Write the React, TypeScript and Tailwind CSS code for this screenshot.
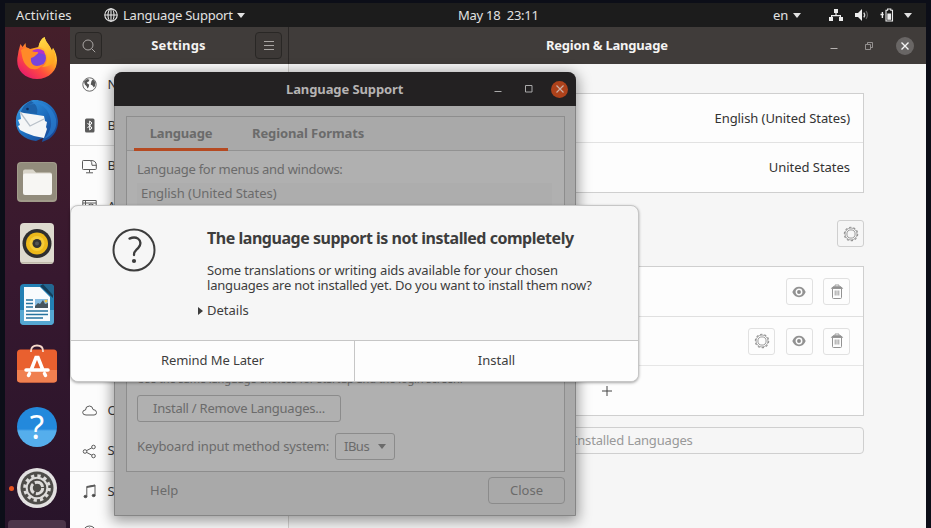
import React from "react";

const FONT = "font-['Noto_Sans','Open_Sans',sans-serif]";

function Caret({ className = "" }: { className?: string }) {
  return (
    <svg viewBox="0 0 8 5" className={`h-[5px] w-2 ${className}`}>
      <path d="M0 0h8L4 5z" fill="currentColor" />
    </svg>
  );
}

function TopBar() {
  return (
    <header className="flex h-6 shrink-0 items-center bg-[#1c1c1c] text-[13px] leading-6 text-[#e2e2e2]">
      <span className="ml-[11px] w-[57px] whitespace-nowrap tracking-[0.16px]">Activities</span>
      <svg viewBox="0 0 14 14" className="ml-[31px] size-[14px]" fill="none" stroke="#e6e6e6" strokeWidth="1.1">
        <circle cx="7" cy="7" r="6.2" />
        <ellipse cx="7" cy="7" rx="3" ry="6.2" />
        <path d="M.8 7h12.4M7 .8v12.4" />
      </svg>
      <span className="ml-[5px] w-[110px] whitespace-nowrap tracking-[-0.22px]">Language Support</span>
      <Caret className="ml-1" />
      <span className="ml-[213px] w-[82px] whitespace-pre tracking-[-0.25px]">May 18  23:11</span>
      <span className="ml-[233px] w-[16px]">en</span>
      <Caret className="ml-1" />
      <svg viewBox="0 0 14 12" className="ml-[28px] h-3 w-[14px]" fill="#ededed">
        <path d="M5 0h4v4H7.6v2H12v2h2v4h-4V8h.8V7.2H3.2V8H4v4H0V8h2V6h4.400V4H5z" />
      </svg>
      <svg viewBox="0 0 14 12" className="ml-3 h-3 w-[14px]" fill="none">
        <path d="M0 4h3l4-4v12L3 8H0z" fill="#ededed" />
        <path d="M8.8 3.6q1.8 2.4 0 4.8" stroke="#d5d5d5" strokeWidth="1.3" />
        <path d="M11 2q2.8 4 0 8" stroke="#666" strokeWidth="1.2" />
      </svg>
      <svg viewBox="0 0 14 14" className="ml-[11px] size-[14px]" fill="none">
        <path d="M2.4 4v6M.5 6.5h3.2" stroke="#ededed" strokeWidth="1.4" />
        <path d="M6 2.2h1.6V1h3.2v1.200h1.700v10.800H6z" stroke="#ededed" strokeWidth="1.1" />
        <path d="M7.300 5.500h3.800v6.300H7.300z" fill="#ededed" />
      </svg>
      <Caret className="ml-[10px]" />
    </header>
  );
}

function Firefox() {
  return (
    <svg viewBox="0 0 42 44" className="h-[44px] w-[42px]">
      <defs>
        <linearGradient id="fx" x1=".85" y1=".1" x2=".2" y2=".9">
          <stop offset="0" stopColor="#ffee45" />
          <stop offset=".4" stopColor="#ff9a24" />
          <stop offset=".7" stopColor="#ff4a40" />
          <stop offset="1" stopColor="#ea2167" />
        </linearGradient>
        <linearGradient id="fy" x1="0" y1="0" x2=".3" y2="1">
          <stop offset="0" stopColor="#ffe04a" />
          <stop offset="1" stopColor="#ffa51f" />
        </linearGradient>
      </defs>
      <path d="M3.500 11.500q-1.300 4-1.500 7C0 27 2 33 6 37c8 8 22 8 30 0 7-7 6-18 1-25l-1 3C34 9 30 7 28.500 1 25 3 23 7 22.500 11L14 13l-4-2-.5-4-3 4-2-3z" fill="url(#fx)" />
      <path d="M28.500 1C25 3 23 7 22.500 11c5 0 9 4 9 9 0 6-2 9-6 11 12 0 17-8 11.500-19l-1 3C34 9 30 7 28.500 1z" fill="url(#fy)" />
      <circle cx="21.500" cy="22" r="8.500" fill="#7745dd" />
      <path d="M16 15q6-4 12 0l1 4q-5-3-9-1z" fill="#b233c9" />
      <path d="M5 14q6-4 10 0 1 2 6 2c2 0 1 2-1 3-2 2-3 2-5 3-1 8 6 10 12 6-4 7-12 6-15 3-6-5-6-12-7-17z" fill="#ff8a28" />
    </svg>
  );
}

function Thunderbird() {
  return (
    <svg viewBox="0 0 44 44" className="size-[44px]">
      <defs>
        <linearGradient id="tb" x1="0" y1="0" x2="1" y2="1">
          <stop offset="0" stopColor="#39a0e6" />
          <stop offset=".5" stopColor="#1f6fc0" />
          <stop offset="1" stopColor="#173a86" />
        </linearGradient>
      </defs>
      <path d="M16 1.500C29-1 42 8 43 22c0 9-4 14-9 18l-7 3 1-4-7 3C9 41 0 33 1 21 1 12 8 5 16 1.500z" fill="url(#tb)" />
      <path d="M16 2q8 4 6 13-8-1-17 0Q8 5 16 2z" fill="#1d62aa" />
      <path d="m5 13 4 1 20 3 1 5 2 1-1 5 1 2-3 9-10-2-8-3-6-3-2-4 2-1-2-5 3-1z" fill="#f5f6f7" />
      <path d="m5 13 10 14 14-7" fill="none" stroke="#b8c0c9" strokeWidth="1.300" />
      <path d="M14 6q14-4 20 9t-5 25q14-6 12-20Q36 4 20 3z" fill="#2b83d6" opacity=".65" />
      <circle cx="12.500" cy="10" r="1.300" fill="#102f60" />
    </svg>
  );
}

function Files() {
  return (
    <svg viewBox="0 0 40 40" className="size-10">
      <rect width="40" height="40" rx="4" fill="#a19b8a" />
      <rect x="1" y="1" width="38" height="37" rx="3.500" fill="#928c7c" />
      <path d="M6 9.500Q6 7.500 8 7.500h8l3 3h14q2 0 2 2V24H6z" fill="#d9d5ca" />
      <rect x="6" y="11.500" width="29" height="21.500" rx="2" fill="#f7f6f3" />
    </svg>
  );
}

function Rhythmbox() {
  return (
    <svg viewBox="0 0 34 41" className="h-[41px] w-[34px]">
      <rect width="34" height="41" rx="4" fill="#dedacf" />
      <rect x="1" y="39" width="32" height="1.500" rx="1" fill="#c0baab" />
      <circle cx="17" cy="20.500" r="14.500" fill="#2f2f2f" />
      <circle cx="17" cy="20.500" r="11" fill="#edb91a" />
      <circle cx="17" cy="20.500" r="7.500" fill="#f6cc38" />
      <circle cx="17" cy="20.500" r="4.500" fill="#333" />
      <circle cx="17" cy="20.500" r="2" fill="#555" />
    </svg>
  );
}

function Writer() {
  return (
    <svg viewBox="0 0 34 41" className="h-[41px] w-[34px]">
      <path d="M4 0h26q4 0 4 4v33q0 4-4 4H4q-4 0-4-4V4q0-4 4-4z" fill="#2380b4" />
      <path d="M0 26h34v11q0 4-4 4H4q-4 0-4-4z" fill="#55a7d2" />
      <path d="M23 0h7q4 0 4 4v8z" fill="#236792" />
      <path d="M4 3h16l10 10v24H4z" fill="#f8fbfd" />
      <path d="m20 2 13 12v-3L23 0z" fill="#163e5a" />
      <path d="M6 16h7M6 19.500h7M6 23h7M6 27h22M6 30.500h22M6 34h17" stroke="#26739f" strokeWidth="1.700" />
      <path d="M15 15h13v9H15z" fill="#86bde2" />
      <path d="m15 22 3-3 2 1 3-4 2 4 3-1v5H15z" fill="#46555d" />
      <circle cx="26" cy="17" r="1.500" fill="#f2c344" />
    </svg>
  );
}

function Software() {
  return (
    <svg viewBox="0 0 40 39" className="h-[39px] w-10">
      <rect y="5.500" width="40" height="33" rx="3.500" fill="#e9602f" />
      <path d="M0 26h40v9q0 3.500-3.500 3.500h-33Q0 38.500 0 35z" fill="#f08050" />
      <path d="M14 8V7q0-5.500 6-5.500T26 7v1" fill="none" stroke="#f6d8ca" strokeWidth="1.800" />
      <path d="m11.500 31.500 1-2M28.500 31.500l-1-2M14.500 25 19 13.500h2L25.500 25M9 26h22" fill="none" stroke="#fff" strokeWidth="3.500" strokeLinecap="round" />
    </svg>
  );
}

function HelpIcon() {
  return (
    <div className="flex size-10 items-center justify-center rounded-full bg-gradient-to-b from-[#2389dc] from-55% to-[#55aeec] to-60% text-[33px] leading-10 text-white">
      <span>?</span>
    </div>
  );
}

function GearDock() {
  return (
    <svg viewBox="0 0 40 40" className="size-10" fill="none">
      <circle cx="20" cy="20" r="20" fill="#e3e1e1" />
      <circle cx="20" cy="20" r="16.500" fill="#4e4d49" />
      <circle cx="20" cy="20" r="12.300" stroke="#dedddb" strokeWidth="3" strokeDasharray="3.300 3.140" />
      <circle cx="20" cy="20" r="10.300" stroke="#dedddb" strokeWidth="2" />
      <circle cx="20" cy="20" r="5.700" stroke="#dedddb" strokeWidth="3" strokeDasharray="9.900 2.040" />
    </svg>
  );
}

function Dock() {
  return (
    <nav className="flex w-[65px] shrink-0 flex-col items-center bg-gradient-to-b from-[#451f2a] via-[#37182f] to-[#28142a] pr-px">
      <div className="mt-[9px] h-[44px]"><Firefox /></div>
      <div className="mt-[19px] h-[44px]"><Thunderbird /></div>
      <div className="mt-[19px] h-10"><Files /></div>
      <div className="mt-[21px] h-[41px]"><Rhythmbox /></div>
      <div className="mt-5 h-[41px]"><Writer /></div>
      <div className="mt-[19px] h-[39px]"><Software /></div>
      <div className="mt-[24px] h-10"><HelpIcon /></div>
      <div className="mt-[21px] flex h-10 w-full items-center">
        <span className="ml-1 mr-[3px] size-[5px] rounded-full bg-[#e95420]" />
        <GearDock />
      </div>
      <div className="mt-[12px] h-3 w-[58px] shrink-0 rounded-t bg-[#4c3549]" />
    </nav>
  );
}

const sideIcons: Record<string, React.ReactNode> = {
  globe: (
    <>
      <circle cx="7.500" cy="7.500" r="6.700" strokeWidth=".9" />
      <path d="M2 4.500 5 2l2.500.8-.8 1.700-1.700.8.500 1.500 1.700.8-.5 2.400-1.300 1.500-.8-2.300-1.800-1.800zM9.500 4l1.500-1.800 2.400 3L13 9l-1.200 1.500-1.300-2-1.800-1z" fill="#555" stroke="none" />
    </>
  ),
  bluetooth: (
    <>
      <rect x="3" y=".5" width="9.500" height="14" rx="1.500" fill="#5b5b5b" stroke="none" />
      <path d="m5.500 5 4.500 5-2.300 2V3L10 5l-4.500 5" stroke="#fff" />
    </>
  ),
  background: (
    <>
      <path d="M8.500 1.500H1.300q-.8 0-.8.800v7.400q0 .8.800.8h12.200q.8 0 .8-.8V6" />
      <path d="M8.500 1.500q5.800-.2 5.800 4.800H10q0-3.300-1.500-4.800zM7.500 10.500v3M4 13.800h7" />
    </>
  ),
  appearance: (
    <>
      <path d="M.8 1.500h13.400v12H.8zM.8 4h13.400M3.500 1.500V13" />
      <circle cx="9" cy="8" r="3" />
      <path d="M9 6v4" />
    </>
  ),
  cloud: <path d="M4 12q-3.300 0-3.300-2.500T3.500 7q0-4 4-4 3 0 3.500 3.500 3.500.3 3.500 3T12 12z" />,
  share: (
    <>
      <circle cx="3" cy="7.500" r="1.800" />
      <circle cx="11.500" cy="3" r="1.800" />
      <circle cx="11.500" cy="12" r="1.800" />
      <path d="m4.600 6.600 5.300-2.800M4.600 8.400l5.300 2.800" />
    </>
  ),
  music: (
    <>
      <path d="M4.800 12V2.500L13 1v10" />
      <path d="M4.800 3.200 13 1.600" strokeWidth="1.600" />
      <ellipse cx="3.500" cy="12.500" rx="1.500" ry="1.200" fill="#444" />
      <ellipse cx="11.700" cy="11.500" rx="1.500" ry="1.200" fill="#444" />
    </>
  ),
  power: (
    <>
      <circle cx="7.500" cy="7.500" r="6.500" />
      <path d="M7.500 2.500v5" />
    </>
  ),
};

const sideRows: { label: string; icon: string; line?: boolean }[] = [
  { label: "Network", icon: "globe" },
  { label: "Bluetooth", icon: "bluetooth", line: true },
  { label: "Background", icon: "background" },
  { label: "Appearance", icon: "appearance" },
  { label: "Notifications", icon: "globe" },
  { label: "Search", icon: "globe" },
  { label: "Applications", icon: "globe" },
  { label: "Privacy", icon: "globe" },
  { label: "Online Accounts", icon: "cloud" },
  { label: "Sharing", icon: "share", line: true },
  { label: "Sound", icon: "music" },
  { label: "", icon: "power" },
];

function Sidebar() {
  return (
    <aside className="w-[219px] shrink-0 overflow-hidden border-r border-[#d6d4d2] bg-[#fcfcfc] pt-px">
      {sideRows.map((r) => (
        <div key={r.icon + r.label} className={`flex h-[40.7px] items-center border-b pl-3 text-[13px] text-[#3a3a3a] ${r.line ? "border-[#dcdcdc]" : "border-transparent"}`}>
          <svg viewBox="0 0 15 15" className="size-[15px]" fill="none" stroke="#5a5a5a" strokeWidth="1">
            {sideIcons[r.icon]}
          </svg>
          <span className="ml-[10.5px]">{r.label}</span>
        </div>
      ))}
    </aside>
  );
}

function SettingsHeader() {
  return (
    <div className="flex h-[37px] shrink-0 bg-[#403c3a] text-[13px] font-bold text-[#f4f3f2]">
      <div className="flex w-[218px] items-center justify-between pl-[5px] pr-[6px]">
        <span className="flex size-[27px] items-center justify-center rounded border border-[#292725] bg-[#3c3836]">
          <svg viewBox="0 0 14 14" className="size-[14px]" fill="none" stroke="#aaa6a4" strokeWidth="1">
            <circle cx="6" cy="6" r="5" />
            <path d="m9.700 9.700 3.500 3.500" />
          </svg>
        </span>
        <span className="tracking-[0.15px]">Settings</span>
        <span className="flex size-[27px] items-center justify-center rounded border border-[#292725] bg-[#3c3836]">
          <svg viewBox="0 0 10 10" className="size-[10px]" stroke="#aaa6a4">
            <path d="M0 .5h10M0 4.500h10M0 8.500h10" />
          </svg>
        </span>
      </div>
      <div className="flex flex-1 items-center border-l border-[#2b2827]">
        <span className="ml-[257px] w-[123px] whitespace-nowrap tracking-[-0.22px]">Region &amp; Language</span>
        <svg viewBox="0 0 8 8" className="ml-[161px] size-2" stroke="#b5b1af"><path d="M.5 6.500h7" /></svg>
        <svg viewBox="0 0 8 8" className="ml-[27px] size-2" fill="none" stroke="#aaa6a4" strokeWidth=".8">
          <path d="M.5 2.500h5v5h-5zM2.500 2V.5h5v5H6" />
        </svg>
        <span className="ml-[23px] flex size-[18px] items-center justify-center rounded-full bg-[#696665]">
          <svg viewBox="0 0 8 8" className="size-2" stroke="#f5f5f5" strokeWidth="1.400"><path d="m.5.5 7 7m0-7-7 7" /></svg>
        </span>
      </div>
    </div>
  );
}

function IconButton({ kind, strong = false }: { kind: "gear" | "eye" | "trash"; strong?: boolean }) {
  return (
    <span className={`flex size-[27px] items-center justify-center rounded-[3px] border ${strong ? "border-[#cfcfcf]" : "border-[#e1e1e1]"}`}>
      <svg viewBox="0 0 16 16" className="size-4" fill="none" stroke="#929292">
        {kind === "gear" && (
          <>
            <circle cx="8" cy="8" r="6.700" strokeWidth="1.100" strokeDasharray="2.200 2.010" />
            <circle cx="8" cy="8" r="6" strokeWidth=".8" />
            <circle cx="8" cy="8" r="4.100" strokeWidth=".9" />
          </>
        )}
        {kind === "eye" && (
          <>
            <path d="M1.300 8Q3.500 2.800 8 2.800T14.700 8Q12.500 13.200 8 13.200T1.300 8z" fill="#929292" stroke="none" />
            <circle cx="8" cy="8" r="2.700" stroke="#fcfcfc" strokeWidth="1.500" fill="#8a8a8a" />
          </>
        )}
        {kind === "trash" && (
          <>
            <path d="M3.500 5v8.500q0 1 1 1h7q1 0 1-1V5" />
            <path d="M2.500 4.400 4 2.800h8l1.500 1.600z" fill="#929292" />
            <path d="M6 2.500v-1.500h4v1.500M6.200 6.500v5M8 6.500v5M9.800 6.500v5" strokeWidth=".9" />
          </>
        )}
      </svg>
    </span>
  );
}

function RegionPanel() {
  return (
    <main className="flex flex-1 flex-col bg-[#f6f6f6] pl-[61px] pr-[62px] pt-[29px] text-[13px] text-[#333]">
      <div className="h-[100px] border border-[#cfcfcf] bg-[#fdfdfd]">
        <div className="flex h-[49px] items-center justify-between border-b border-[#e2e2e2] px-[13px] pt-px">
          <span>Language</span>
          <span className="tracking-[-0.07px]">English (United States)</span>
        </div>
        <div className="flex h-[49px] items-center justify-between px-[13px]">
          <span>Formats</span>
          <span className="tracking-[-0.04px]">United States</span>
        </div>
      </div>
      <div className="mt-[27px] flex h-[27px] items-center justify-between">
        <span className="font-bold">Input Sources</span>
        <IconButton kind="gear" strong />
      </div>
      <div className="mt-[19px] h-[150px] border border-[#cfcfcf] bg-[#fdfdfd]">
        <div className="flex h-[50px] items-center justify-end gap-[10.5px] border-b border-[#e0e0e0] pr-[13px]">
          <IconButton kind="eye" /><IconButton kind="trash" />
        </div>
        <div className="flex h-[49px] items-center justify-end gap-[10.5px] border-b border-[#e6e6e6] pr-[13px]">
          <IconButton kind="gear" /><IconButton kind="eye" /><IconButton kind="trash" />
        </div>
        <div className="flex h-[49px] items-center justify-center">
          <svg viewBox="0 0 10 10" className="size-[10px]" stroke="#444"><path d="M5 0v10M0 5h10" /></svg>
        </div>
      </div>
      <div className="mt-[11px] flex h-[27px] items-center justify-center rounded border border-[#cfcfcf] tracking-[-0.18px] text-[#999]">
        <span className="-mr-px">Manage</span>
        <span className="ml-1">Installed Languages</span>
      </div>
    </main>
  );
}

function LanguageWindow() {
  return (
    <section className="absolute left-[114px] top-[72px] flex h-[444px] w-[462px] flex-col rounded-t-lg border border-[#858585] bg-[#a9a9a9] text-[13px] text-[#6b6b6b] shadow-[0_3px_14px_2px_rgba(0,0,0,0.4)]">
      <div className="-mx-px -mt-px flex h-[34px] shrink-0 items-center rounded-t-lg bg-[#232122] font-bold text-[#b5b3b3]">
        <span className="ml-[172px] w-[119px] whitespace-nowrap pt-px tracking-[-0.1px]">Language Support</span>
        <svg viewBox="0 0 8 8" className="ml-[89px] size-2" stroke="#aaa"><path d="M.5 6.500h7" /></svg>
        <svg viewBox="0 0 8 8" className="ml-[23px] size-2" fill="none" stroke="#aaa"><path d="M.5.5h6.500v6.500H.5z" /></svg>
        <span className="ml-[18px] flex size-[17px] items-center justify-center rounded-full bg-[#ad421b]">
          <svg viewBox="0 0 8 8" className="size-2" stroke="#c9b0a6" strokeWidth="1.200"><path d="m.5.5 7 7m0-7-7 7" /></svg>
        </span>
      </div>
      <div className="ml-[11px] mt-[10px] flex h-[356px] w-[439px] shrink-0 flex-col border border-[#8d8d8d] bg-[#b0b0b0]">
        <div className="flex h-[34px] shrink-0 border-b border-[#929292] bg-[#a9a9a9] pl-[7px] font-bold">
          <div className="h-[34px] w-[94px] border-b-[3px] border-[#b54a22] pt-[7px] text-center tracking-[-0.15px]">Language</div>
          <div className="ml-[24px] whitespace-nowrap pt-[7px] tracking-[-0.1px]">Regional Formats</div>
        </div>
        <div className="flex flex-1 flex-col items-start pl-[10px]">
          <div className="mt-[8px] h-5 leading-5 tracking-[-0.28px]">Language for menus and windows:</div>
          <div className="mt-[4px] h-[188px] w-[415px] bg-[#adadad] pl-1 leading-[20px] tracking-[-0.07px]">English (United States)</div>
          <div className="h-4 whitespace-nowrap text-[11px] leading-4 tracking-[-0.1px]">Use the same language choices for startup and the login screen.</div>
          <div className="mt-[8px] flex h-[27px] w-[204px] items-center justify-center whitespace-nowrap rounded-[3px] border border-[#8b8b8b] tracking-[-0.24px]">Install / Remove Languages...</div>
          <div className="mt-[11px] flex items-center">
            <span className="w-[198px] whitespace-nowrap tracking-[-0.1px]">Keyboard input method system:</span>
            <span className="flex h-[27px] w-[60px] items-center justify-between rounded-[3px] border border-[#8b8b8b] px-2 tracking-[-0.5px]"><span>IBus</span><Caret /></span>
          </div>
        </div>
      </div>
      <div className="mt-[5px] flex h-[27px] items-center justify-between pl-[35px] pr-[10px]">
        <span>Help</span>
        <span className="flex h-[27px] w-[77px] items-center justify-center rounded border border-[#8b8b8b]">Close</span>
      </div>
    </section>
  );
}

function InstallDialog() {
  return (
    <section className="absolute left-[70px] top-[205px] flex h-[177px] w-[569px] flex-col overflow-hidden rounded-lg border border-[#c6c6c6] bg-[#f6f6f6] text-[13px] text-[#3d3d3d] shadow-[0_1px_3px_rgba(0,0,0,0.35)]">
      <div className="flex h-[134px] shrink-0">
        <svg viewBox="0 0 44 44" className="ml-[41px] mt-[22px] size-11" fill="none" stroke="#3d3d3d" strokeLinecap="round">
          <circle cx="22" cy="22" r="20.500" strokeWidth="2" />
          <path d="M17.500 10.600Q22.500 8.400 26 10.600q3.600 2.700 1.800 7-1.200 2.200-3.300 4-2.600 2.400-2.500 5.400" strokeWidth="2.300" />
          <circle cx="22" cy="33" r="2.100" fill="#3d3d3d" stroke="none" />
        </svg>
        <div className="ml-[51px] pt-[20px]">
          <h1 className="whitespace-nowrap text-[16px] font-bold leading-6 tracking-[-0.47px]">The language support is not installed completely</h1>
          <p className="mt-[13px] whitespace-nowrap leading-[15px] tracking-[-0.12px]">
            Some translations or writing aids available for your chosen
            <br />
            <span className="tracking-[-0.2px]">languages are not installed yet. Do you want to install them now?</span>
          </p>
          <div className="-ml-[9px] mt-[8px] flex h-5 items-center">
            <svg viewBox="0 0 5 8" className="h-2 w-[5px]" fill="#3d3d3d"><path d="m0 0 5 4-5 4z" /></svg>
            <span className="ml-1">Details</span>
          </div>
        </div>
      </div>
      <div className="flex flex-1 border-t border-[#c6c6c6] bg-[#fdfdfd]">
        <div className="flex w-[284px] items-center justify-center border-r border-[#c6c6c6] tracking-[-0.1px]">Remind Me Later</div>
        <div className="flex flex-1 items-center justify-center">Install</div>
      </div>
    </section>
  );
}

export default function App() {
  return (
    <div className={`relative flex h-[528px] w-[931px] flex-col overflow-hidden bg-[#0c0e18] pl-[5px] pr-[5px] pt-[3px] ${FONT}`}>
      <TopBar />
      <div className="flex min-h-0 flex-1">
        <Dock />
        <div className="flex min-w-0 flex-1 flex-col">
          <SettingsHeader />
          <div className="flex min-h-0 flex-1">
            <Sidebar />
            <RegionPanel />
          </div>
        </div>
      </div>
      <LanguageWindow />
      <InstallDialog />
    </div>
  );
}
